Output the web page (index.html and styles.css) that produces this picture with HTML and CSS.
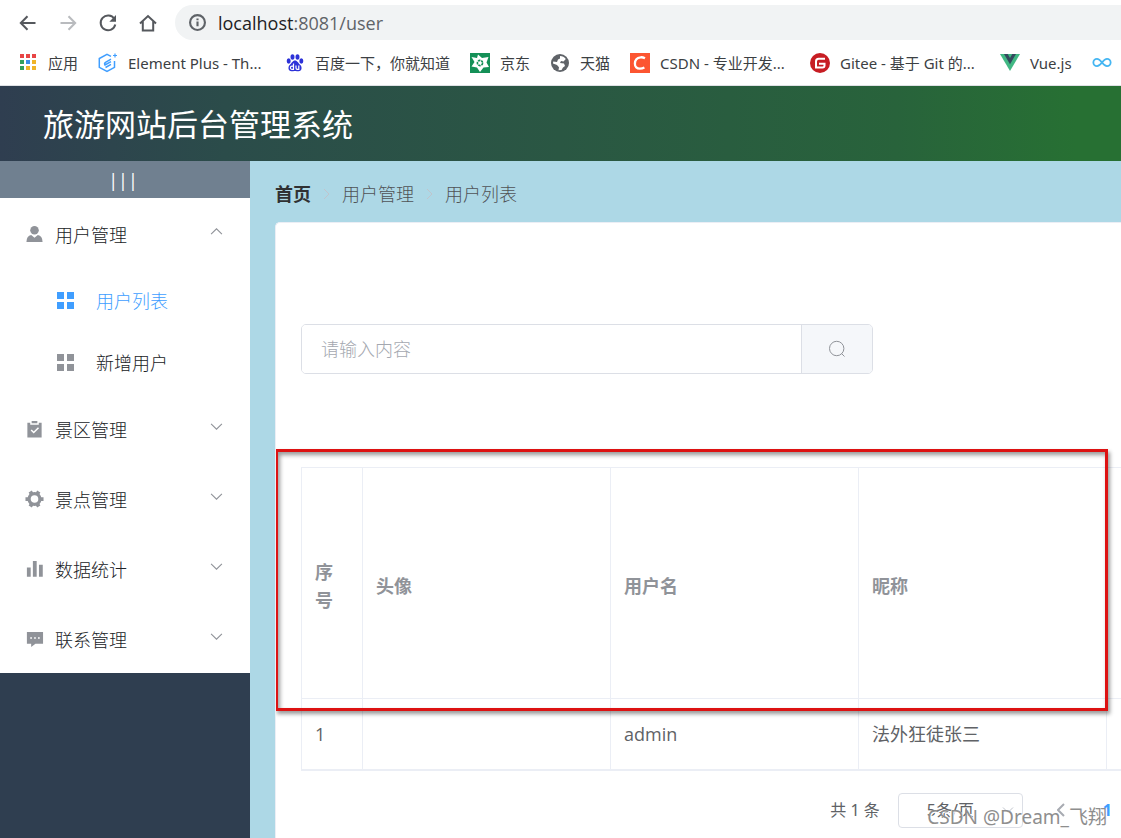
FILE: index.html
```
<!DOCTYPE html>
<html lang="zh-CN">
<head>
<meta charset="utf-8">
<title>旅游网站后台管理系统</title>
<link rel="stylesheet" href="styles.css">
</head>
<body>
<div class="browser">
  <div class="toolbar">
    <button class="nav-btn" aria-label="后退"><svg viewBox="0 0 20 20"><path d="M17.500 10H3M9.500 3.200L2.800 10l6.700 6.800"/></svg></button>
    <button class="nav-btn nav-off" aria-label="前进"><svg viewBox="0 0 20 20"><path d="M2.500 10H17M10.500 3.200l6.700 6.800-6.700 6.800"/></svg></button>
    <button class="nav-btn" aria-label="刷新"><svg viewBox="0 0 20 20"><path d="M16.300 5.800A7.400 7.400 0 1 0 17.300 11.500"/><path d="M18 2v6.700h-6.700z" fill="currentColor" stroke="none"/></svg></button>
    <button class="nav-btn" aria-label="主页"><svg viewBox="0 0 20 20"><path d="M2 10.500L10 3l8 7.500M4.800 8.500v9h10.400v-9"/></svg></button>
    <div class="address">
      <svg class="info" viewBox="0 0 16 16"><circle cx="8" cy="8" r="7"/><path d="M8 7v4.500M8 4.200v1.700"/></svg>
      <span><b>localhost</b>:8081/user</span>
    </div>
  </div>
  <nav class="bookmarks" aria-label="书签">
    <a href="#"><svg viewBox="0 0 20 20"><path fill="#e84545" d="M2 1h4v4H2zM8 1h4v4H8zM14 1h4v4h-4z"/><path fill="#34a05c" d="M2 7h4v4H2zM2 13h4v4H2z"/><path fill="#3b8ee8" d="M8 7h4v4H8z"/><path fill="#f0b428" d="M14 7h4v4h-4zM8 13h4v4H8zM14 13h4v4h-4z"/></svg>应用</a>
    <a href="#"><svg viewBox="0 0 20 20"><g fill="none" stroke="#409eff" stroke-width="1.500"><path d="M13 3.300L9 1.300 1.300 5.500v8.800L9 18.500l7.500-4.200V8"/><path d="M13 6.200L7.500 9.300q-1.500 1-.500 2.700l6-3.400M13 11.300l-5.500 3.200"/><path d="M17 .500v4M15 2.500h4" stroke-width="1.200"/></g></svg>Element Plus - Th...</a>
    <a href="#"><svg viewBox="0 0 20 20"><g fill="#2d32d8"><ellipse cx="3.700" cy="8" rx="2" ry="2.700"/><ellipse cx="7.500" cy="4" rx="2" ry="2.800"/><ellipse cx="12.500" cy="4" rx="2" ry="2.800"/><ellipse cx="16.300" cy="8" rx="2" ry="2.700"/><path d="M10 7.500c-2.500 0-3 2.500-5 4.200-2.500 2-2 6.300 1.500 6.500 1.500 0 2-.300 3.500-.300s2 .300 3.500.300c3.500-.200 4-4.500 1.500-6.500-2-1.700-2.500-4.200-5-4.200z"/></g><g fill="none" stroke="#fff" stroke-width="1.200"><path d="M8.500 10.500v5.800H7a1.600 1.600 0 0 1 0-3.200h1.500M11 12.500v2.500q0 1.300 1.300 1.300h1.500v-3.800"/></g></svg>百度一下，你就知道</a>
    <a href="#"><svg viewBox="0 0 20 20"><path fill="#149057" d="M0 0h20v20H0z"/><path fill="#fff" d="M8 1.500l4 3.500 6.500-1-2 5.500 2.500 4.500-5.500.500L10 19l-3-4.500-5.500-1L4.500 9 1.500 4l5.500 1z"/><circle cx="10" cy="10" r="2.600" fill="none" stroke="#149057" stroke-width="1.600" stroke-dasharray="2.500 .800"/></svg>京东</a>
    <a href="#"><svg viewBox="0 0 20 20"><circle cx="10" cy="10" r="9" fill="#5f6368"/><path fill="#fff" d="M10 3c2.500 0 4.500 1 5.800 3L13.500 8.500l-2.500-.500-1 2 4 .500 1 2.500-2 1.500-1.500 2.500-3 .300.500-3L7 12l-4-1.500.200-2 3.800.500 1-2.500 2-1z"/></svg>天猫</a>
    <a href="#"><svg viewBox="0 0 20 20"><path fill="#fc5531" d="M0 0h20v20H0z"/><path d="M15 5.200Q12.500 4 10.500 4.300C7 4.700 5 7.400 4.900 10.600c-.100 3.400 2 5 5 5q2.400 0 4.500-1.100" fill="none" stroke="#fff" stroke-width="2.300"/></svg>CSDN - 专业开发...</a>
    <a href="#"><svg viewBox="0 0 20 20"><circle cx="10" cy="10" r="10" fill="#c71d23"/><path d="M15 5.800H8.700Q6 5.800 6 8.500v6h6.500q2 0 2-2v-1.700H9" fill="none" stroke="#fff" stroke-width="2"/></svg>Gitee - 基于 Git 的...</a>
    <a href="#"><svg viewBox="0 0 20 20"><path fill="#41b883" d="M0 1h20L10 18z"/><path fill="#34495e" d="M4 1h3.700L10 5l2.300-4H16l-6 10.200z"/></svg>Vue.js</a>
    <a href="#" aria-label="书签"><svg viewBox="0 0 22 20"><path d="M11 9.500C8.500 6.300 7.300 5.500 5.500 5.500a4 4 0 0 0 0 8c1.800 0 3-.800 5.500-4s3.700-4 5.500-4a4 4 0 0 1 0 8c-1.800 0-3-.800-5.500-4z" fill="none" stroke="#45b6f2" stroke-width="2"/></svg></a>
  </nav>
</div>

<header class="app-header"><h1>旅游网站后台管理系统</h1></header>

<div class="app-body">
  <aside class="sidebar">
    <button class="toggle">|||</button>
    <ul class="menu">
      <li>
        <button class="group"><svg class="ico" viewBox="0 0 20 20"><circle cx="10" cy="5.500" r="4.500"/><path d="M1.500 18q0-6.500 5-7.500l3.500 3 3.500-3q5 1 5 7.500z"/></svg>用户管理<svg class="arrow" viewBox="0 0 12 12"><path d="M1 8.500l5-5 5 5"/></svg></button>
        <ul class="submenu">
          <li><a class="active" href="#"><svg class="ico" viewBox="0 0 20 20"><path d="M2 1h7v7H2zM12 1h7v7h-7zM2 11h7v7H2zM12 11h7v7h-7z"/></svg>用户列表</a></li>
          <li><a href="#"><svg class="ico" viewBox="0 0 20 20"><path d="M2 1h7v7H2zM12 1h7v7h-7zM2 11h7v7H2zM12 11h7v7h-7z"/></svg>新增用户</a></li>
        </ul>
      </li>
      <li><button class="group"><svg class="ico" viewBox="0 0 20 20"><path d="M2.500 3h3v2h9V3h3v15.500h-15zM7 1h6v2.500H7z"/><path d="M6.500 10.500l2.700 2.700 5-5" fill="none" stroke="#fff" stroke-width="1.600"/></svg>景区管理<svg class="arrow" viewBox="0 0 12 12"><path d="M1 3.500l5 5 5-5"/></svg></button></li>
      <li><button class="group"><svg class="ico" viewBox="0 0 20 20"><circle cx="10" cy="9.500" r="5.700" fill="none" stroke="#909399" stroke-width="3.400"/><path d="M.500 7.500h3v4h-3zM16.500 7.500h3v4h-3zM3.800 2.600l3.400-2 1.600 2.700-3.400 2zM12.800.600l3.400 2-1.600 2.700-3.400-2zM3.800 16.400l3.400 2 1.600-2.700-3.400-2zM12.800 18.400l3.400-2-1.600-2.700-3.400 2z"/></svg>景点管理<svg class="arrow" viewBox="0 0 12 12"><path d="M1 3.500l5 5 5-5"/></svg></button></li>
      <li><button class="group"><svg class="ico" viewBox="0 0 20 20"><path d="M2 8h4v9.500H2zM8.300 1h4v16.500h-4zM14.700 5h4v12.500h-4z"/></svg>数据统计<svg class="arrow" viewBox="0 0 12 12"><path d="M1 3.500l5 5 5-5"/></svg></button></li>
      <li><button class="group"><svg class="ico" viewBox="0 0 20 20"><path d="M2 2h17v12.500h-8l-4.500 3.500v-3.500H2z"/><path fill="#fff" d="M5.500 7.500h1.800v1.800H5.500zM9.600 7.500h1.800v1.800H9.600zM13.700 7.500h1.800v1.800h-1.800z"/></svg>联系管理<svg class="arrow" viewBox="0 0 12 12"><path d="M1 3.500l5 5 5-5"/></svg></button></li>
    </ul>
  </aside>

  <main class="content">
    <nav class="crumbs" aria-label="面包屑">
      <a class="home" href="#">首页</a>
      <svg viewBox="0 0 7 14"><path d="M1 2l5 5-5 5"/></svg>
      <span>用户管理</span>
      <svg viewBox="0 0 7 14"><path d="M1 2l5 5-5 5"/></svg>
      <span>用户列表</span>
    </nav>
    <section class="card">
      <form class="search">
        <input type="text" placeholder="请输入内容" aria-label="请输入内容">
        <button type="button" aria-label="搜索"><svg viewBox="0 0 18 18"><circle cx="8.700" cy="8.500" r="7.200"/><path d="M13.500 13.500l3 3"/></svg></button>
      </form>
      <div class="table-wrap">
        <table>
          <colgroup><col class="col-index"><col class="col"><col class="col"><col class="col"><col class="col"></colgroup>
          <thead><tr><th>序号</th><th>头像</th><th>用户名</th><th>昵称</th><th>电话</th></tr></thead>
          <tbody><tr><td>1</td><td></td><td>admin</td><td>法外狂徒张三</td><td>1</td></tr></tbody>
        </table>
        <div class="marker"></div>
      </div>
      <div class="pager">
        <span>共 1 条</span>
        <span class="size">
          <select aria-label="每页条数"><option>5条/页</option></select>
          <svg viewBox="0 0 12 12"><path d="M1 3.500l5 5 5-5"/></svg>
        </span>
        <button class="prev" aria-label="上一页"><svg viewBox="0 0 8 14"><path d="M7 1L1 7l6 6"/></svg></button>
        <button class="page">1</button>
        <div class="watermark">CSDN @Dream_飞翔</div>
      </div>
    </section>
  </main>
</div>
</body>
</html>
```
FILE: styles.css
```
* { box-sizing: border-box; }
body {
  margin: 0;
  min-height: 100vh;
  display: flex;
  flex-direction: column;
  overflow: hidden;
  font: 18px/28px "Open Sans", "Noto Sans CJK SC", sans-serif;
  font-weight: 300;
  color: #202226;
  background: #fff;
}
button, input, select { font: inherit; color: inherit; }
button { border: 0; padding: 0; background: none; }
a { color: inherit; text-decoration: none; }
ul { list-style: none; margin: 0; padding: 0; }
svg { flex: none; }

/* Browser chrome */
.browser { border-bottom: 1px solid #dfe1e5; font-weight: 400; }
.toolbar { display: flex; align-items: center; gap: 20px; height: 45px; padding-left: 18px; }
.nav-btn { display: flex; color: #55585d; }
.nav-btn svg { width: 20px; height: 20px; fill: none; stroke: currentColor; stroke-width: 2; }
.nav-off { color: #b9bbbe; }
.address {
  flex: 1;
  display: flex;
  align-items: center;
  gap: 12px;
  height: 35px;
  margin-left: -3px;
  padding-left: 14px;
  border-radius: 18px 0 0 18px;
  background: #f1f3f4;
  color: #606368;
}
.address b { font-weight: 400; color: #202124; }
.info { width: 17px; height: 17px; fill: none; stroke: #5f6368; stroke-width: 2; }
.bookmarks {
  display: grid;
  grid-template-columns: 60px 167px 165px 60px 60px 160px 170px 72px auto;
  gap: 20px;
  height: 40px;
  padding: 0 0 4px 18px;
  font-family: "Noto Sans", "Noto Sans CJK SC", sans-serif;
  font-size: 15px;
  color: #3c4043;
}
.bookmarks a { display: flex; align-items: center; gap: 10px; white-space: nowrap; }
.bookmarks svg { width: 20px; height: 20px; }

/* Application header */
.app-header {
  display: flex;
  align-items: center;
  height: 75px;
  padding-left: 43px;
  background: linear-gradient(to right, #2f3e50, #2b4c4a 20%, #2a5743 50%, #28633b 80%, #277033 96%);
  color: #fff;
}
.app-header h1 { margin: 0; font-size: 31px; line-height: 40px; font-weight: 400; }
.app-body { flex: 1; display: flex; }

/* Sidebar */
.sidebar { flex: none; width: 250px; background: #2f3e50; }
.toggle { display: block; width: 100%; height: 37px; padding-right: 4px; background: #708090; color: #fff; font-weight: 400; }
.menu { background: #fff; }
.group { display: flex; align-items: center; width: 100%; height: 70px; padding: 4px 27px 0 25px; text-align: left; }
.ico { width: 20px; height: 20px; fill: #909399; }
.group .ico { width: 19px; height: 19px; margin: 0 11px 2px 0; }
.arrow { width: 13px; height: 13px; margin: 0 0 8px auto; fill: none; stroke: #909399; stroke-width: 1; }
.submenu { padding-bottom: 1px; }
.submenu a { display: flex; align-items: center; gap: 21px; height: 62px; padding: 4px 0 0 55px; }
.submenu .active { color: #409eff; }
.active .ico { fill: #409eff; }

/* Main area */
.content { flex: 1; min-width: 0; display: flex; flex-direction: column; padding: 19px 0 0 25px; background: #add8e6; }
.crumbs { display: flex; align-items: center; gap: 12px; margin-bottom: 14px; color: #505356; }
.crumbs .home { font-weight: 700; color: #303133; }
.crumbs svg { width: 7px; height: 14px; fill: none; stroke: #c0c4cc; stroke-width: 1; }
.card { flex: 1; padding: 101px 0 10px 25px; border: 1px solid #ebeef5; border-right: 0; border-radius: 5px 0 0 0; background: #fff; overflow: hidden; }
.search { display: flex; width: 572px; height: 50px; border: 1px solid #dcdfe6; border-radius: 5px; overflow: hidden; }
.search input { flex: 1; min-width: 0; padding: 0 19px; border: 0; outline: 0; background: #fff; }
.search input::placeholder { color: #a4a8b0; opacity: 1; }
.search button { width: 71px; display: flex; align-items: center; justify-content: center; border-left: 1px solid #dcdfe6; background: #f5f7fa; }
.search button svg { width: 18px; height: 18px; fill: none; stroke: #909399; stroke-width: 1; }

.table-wrap { position: relative; margin-top: 93px; color: #606266; }
table { width: 1053px; table-layout: fixed; border-collapse: collapse; border-bottom: 2px solid #ebeef5; font-weight: 400; }
.col-index { width: 61px; }
.col { width: 248px; }
th, td { border: 1px solid #ebeef5; padding: 0 13px; text-align: left; }
th { height: 231px; padding-top: 5px; font-weight: 700; color: #909399; }
td { height: 71px; font-weight: inherit; }
.marker {
  position: absolute;
  left: -26px;
  top: -18px;
  width: 833px;
  height: 262px;
  border: 3px solid #dd1212;
  box-shadow: 2px 3px 4px rgba(0, 0, 0, .4), inset 2px 3px 4px rgba(0, 0, 0, .4);
  pointer-events: none;
}

.pager {
  position: relative;
  display: flex;
  align-items: center;
  justify-content: flex-end;
  height: 35px;
  margin-top: 22px;
  padding-right: 9px;
  font-family: "Noto Sans", "Noto Sans CJK SC", sans-serif;
  font-size: 16px;
  font-weight: 400;
  color: #606266;
}
.size { display: grid; margin: 0 34px 0 18px; }
.size select {
  grid-area: 1 / 1;
  width: 125px;
  height: 35px;
  padding: 0 20px 0 0;
  border: 1px solid #dcdfe6;
  border-radius: 4px;
  background: #fff;
  appearance: none;
  text-align: center;
  text-align-last: center;
}
.size svg { grid-area: 1 / 1; place-self: center end; width: 12px; height: 12px; margin-right: 9px; fill: none; stroke: #c0c4cc; pointer-events: none; }
.prev { display: flex; margin-right: 38px; }
.prev svg { width: 8px; height: 14px; fill: none; stroke: #a8abb2; stroke-width: 2; }
.page { color: #409eff; font-weight: 700; }
.watermark {
  position: absolute;
  right: 14px;
  top: 10px;
  font-size: 19px;
  color: #8e8e8e;
  text-shadow: 1px 1px 0 #fff;
  white-space: nowrap;
  pointer-events: none;
}
```
